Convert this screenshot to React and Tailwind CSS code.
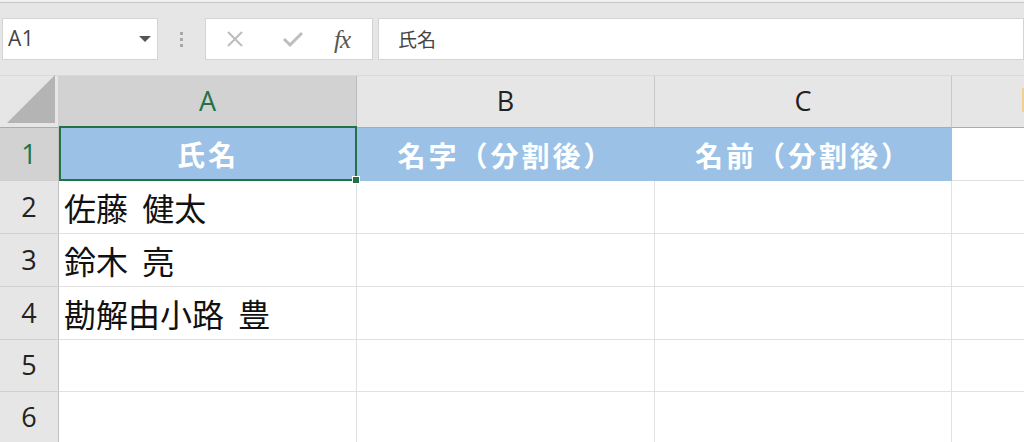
import React from "react";

const cjk = { fontFamily: '"Noto Sans CJK JP", "Noto Sans", sans-serif' };
const lat = { fontFamily: '"Open Sans", "Noto Sans", "Liberation Sans", sans-serif' };

const rows = [
  { n: "1", h: "h-[53px]" },
  { n: "2", h: "h-[53px]", a: "佐藤 健太" },
  { n: "3", h: "h-[53px]", a: "鈴木 亮" },
  { n: "4", h: "h-[53px]", a: "勘解由小路 豊" },
  { n: "5", h: "h-[52px]" },
  { n: "6", h: "h-[52px]" },
];

export default function App() {
  return (
    <div className="w-[1024px] h-[442px] overflow-hidden bg-[#e6e6e6] flex flex-col">
      {/* top strip */}
      <div className="h-[3px] shrink-0 bg-[#f0f0f0] border-b border-[#c6c6c6]" />
      {/* formula bar */}
      <div className="h-[72px] shrink-0 flex items-start pt-[15px] pl-[2px]">
        <div className="w-[156px] h-[42px] bg-white border border-[#d4d4d4] flex items-center justify-between pl-[5px] pr-[6px]">
          <span className="text-[21px] text-[#444] tracking-[0.5px]" style={lat}>A1</span>
          <svg width="12" height="7" viewBox="0 0 12 7"><path d="M0 0h12L6 6z" fill="#555" /></svg>
        </div>
        <div className="w-[47px] h-[42px] flex items-center justify-center">
          <div className="flex flex-col gap-[3px]">
            <span className="w-[3px] h-[3px] bg-[#a8a8a8]" />
            <span className="w-[3px] h-[3px] bg-[#a8a8a8]" />
            <span className="w-[3px] h-[3px] bg-[#a8a8a8]" />
          </div>
        </div>
        <div className="w-[168px] h-[42px] bg-white border border-[#d4d4d4] flex items-center">
          <svg className="ml-[20px]" width="18" height="18" viewBox="0 0 18 18">
            <path d="M2 2L16 16M16 2L2 16" stroke="#bdbdbd" strokeWidth="2" />
          </svg>
          <svg className="ml-[38px]" width="22" height="18" viewBox="0 0 22 18">
            <path d="M2 9L8 15L20 3" stroke="#bdbdbd" strokeWidth="3" fill="none" />
          </svg>
          <span className="ml-[30px] text-[25px] italic text-[#555] leading-none tracking-[-1px]" style={{ fontFamily: '"Liberation Serif", serif' }}>fx</span>
        </div>
        <div className="ml-[5px] flex-1 h-[42px] bg-white border border-[#d4d4d4] flex items-center pl-[19px]">
          <span className="text-[19px] text-[#444]" style={cjk}>氏名</span>
        </div>
      </div>

      {/* grid */}
      <div className="shrink-0 flex flex-col">
        {/* column headers */}
        <div className="h-[53px] shrink-0 flex border-t border-[#dadada]">
          <div className="w-[59px] border-r border-[#d0d0d0] border-b border-b-[#ababab] flex items-end justify-end pr-[3px] pb-[4px]">
            <svg width="48" height="48" viewBox="0 0 48 48"><path d="M48 0V48H0z" fill="#b4b4b4" /></svg>
          </div>
          <div className="w-[298px] bg-[#d2d2d2] border-r border-[#bcbcbc] border-b-2 border-b-[#217346] flex items-center justify-center">
            <span className="text-[27px] text-[#217346]" style={lat}>A</span>
          </div>
          <div className="w-[298px] bg-[#e6e6e6] border-r border-[#c8c8c8] border-b border-b-[#ababab] flex items-center justify-center">
            <span className="text-[27px] text-[#222]" style={lat}>B</span>
          </div>
          <div className="w-[297px] bg-[#e6e6e6] border-r border-[#c8c8c8] border-b border-b-[#ababab] flex items-center justify-center">
            <span className="text-[27px] text-[#222]" style={lat}>C</span>
          </div>
          <div className="flex-1 bg-[#e6e6e6] border-b border-b-[#ababab] relative">
            <span className="absolute right-0 top-[12px] w-[2px] h-[24px] bg-[#f0d090]" />
          </div>
        </div>

        {rows.map((r, i) => (
          <div key={r.n} className={`${r.h} shrink-0 flex`}>
            <div
              className={`w-[59px] border-r border-[#c0c0c0] border-b border-b-[#d0d0d0] flex items-center justify-center ${
                i === 0 ? "bg-[#d2d2d2]" : "bg-[#e6e6e6]"
              }`}
            >
              <span className={`text-[27px] ${i === 0 ? "text-[#217346]" : "text-[#222]"}`} style={lat}>{r.n}</span>
            </div>
            {i === 0 ? (
              <>
                <div className="w-[298px] bg-[#9bc2e6] border-2 border-[#217346] -mt-[2px] relative flex items-center justify-center">
                  <span className="text-[28px] font-bold text-white tracking-[3px]" style={cjk}>氏名</span>
                  <span className="absolute -right-[5px] -bottom-[5px] w-[8px] h-[8px] bg-[#217346] border border-white" />
                </div>
                <div className="w-[298px] bg-[#9bc2e6] flex items-center justify-center">
                  <span className="text-[28px] font-bold text-white tracking-[3px]" style={cjk}>名字（分割後）</span>
                </div>
                <div className="w-[297px] bg-[#9bc2e6] flex items-center justify-center">
                  <span className="text-[28px] font-bold text-white tracking-[3px]" style={cjk}>名前（分割後）</span>
                </div>
                <div className="flex-1 bg-white border-b border-[#e1e1e1]" />
              </>
            ) : (
              <>
                <div className="w-[298px] bg-white border-r border-b border-[#e1e1e1] flex items-center pl-[5px]">
                  <span className="text-[32px] text-[#111] whitespace-pre" style={cjk}>{r.a ? r.a.replace(" ", "  ") : ""}</span>
                </div>
                <div className="w-[298px] bg-white border-r border-b border-[#e1e1e1]" />
                <div className="w-[297px] bg-white border-r border-b border-[#e1e1e1]" />
                <div className="flex-1 bg-white border-b border-[#e1e1e1]" />
              </>
            )}
          </div>
        ))}
      </div>
    </div>
  );
}
